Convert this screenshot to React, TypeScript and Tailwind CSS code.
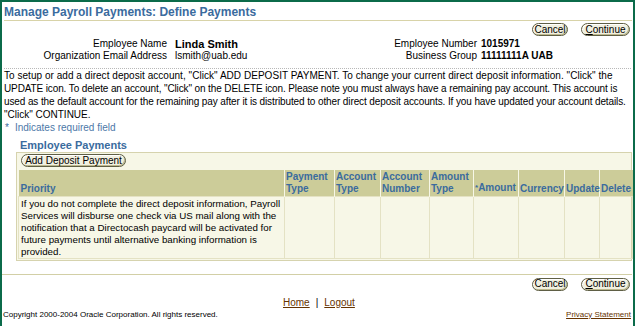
import React from "react";

const Btn = ({ children, w }: { children: React.ReactNode; w: string }) => (
  <button
    className={`${w} h-[13px] flex items-center justify-center rounded-[7px] border border-[#5f5f45] bg-[#f1f0e0] text-[10px] leading-[10px] text-black shadow-[inset_-1px_-1px_0_#bdb88e,inset_1px_1px_0_#ffffff]`}
  >
    {children}
  </button>
);

export default function App() {
  const cols = [
    { t: "Payment", b: "Type" },
    { t: "Account", b: "Type" },
    { t: "Account", b: "Number" },
    { t: "Amount", b: "Type" },
    { t: "", b: "Amount", req: true },
    { t: "", b: "Currency" },
    { t: "", b: "Update" },
    { t: "", b: "Delete" },
  ];
  const widths = [266, 50, 46, 49, 44, 45, 46, 35, 33];
  const para = [
    { t: 'To setup or add a direct deposit account, "Click" ADD DEPOSIT PAYMENT. To change your current direct deposit information. "Click" the', c: "tracking-[0.04px]" },
    { t: 'UPDATE icon. To delete an account, "Click" on the DELETE icon. Please note you must always have a remaining pay account. This account is', c: "tracking-[-0.12px]" },
    { t: "used as the default account for the remaining pay after it is distributed to other direct deposit accounts. If you have updated your account details.", c: "tracking-[-0.11px]" },
    { t: '"Click" CONTINUE.', c: "" },
  ];
  const body = [
    "If you do not complete the direct deposit information, Payroll",
    "Services will disburse one check via US mail along with the",
    "notification that a Directocash paycard will be activated for",
    "future payments until alternative banking information is",
    "provided.",
  ];
  return (
    <div
      className="w-[635px] h-[326px] border-l-2 border-t-2 border-r-2 border-[#0b6b4a] bg-white text-black overflow-hidden flex flex-col"
      style={{ fontFamily: '"Liberation Sans", Arial, sans-serif' }}
    >
      <div className="pl-[2px] pr-[1px] pt-[3px]">
        <div className="text-[12px] leading-[14px] font-bold text-[#3a6b9e] pb-[1px] border-b border-[#d8d3a8]">
          Manage Payroll Payments: Define Payments
        </div>
      </div>
      <div className="flex justify-end gap-[13px] pr-[3px] pt-[2px]">
        <Btn w="w-[36px]">Cancel</Btn>
        <Btn w="w-[49px]">
          <span>
            <span className="underline">C</span>ontinue
          </span>
        </Btn>
      </div>
      <div className="flex text-[10px] leading-[12px] pt-[2px] pl-[2px]">
        <div className="w-[163px] text-right flex flex-col">
          <span>Employee Name</span>
          <span>Organization Email Address</span>
        </div>
        <div className="flex-1 pl-[8px] flex flex-col">
          <span className="font-bold text-[11px]">Linda Smith</span>
          <span>lsmith@uab.edu</span>
        </div>
        <div className="text-right flex flex-col">
          <span>Employee Number</span>
          <span>Business Group</span>
        </div>
        <div className="w-[156px] pl-[4px] flex flex-col font-bold">
          <span>1015971</span>
          <span>11111111A UAB</span>
        </div>
      </div>
      <div className="mx-[2px] mt-[6px] border-b border-dotted border-[#b8b8b8]" />
      <div className="pl-[2px] text-[10px] leading-[13px] whitespace-nowrap">
        {para.map((l, i) => (
          <div key={i} className={l.c}>
            {l.t}
          </div>
        ))}
      </div>
      <div className="pl-[3px] text-[10px] leading-[13px] text-[#4d78a8]">
        <span className="text-[#3a6b9e]">*</span>
        <span className="pl-[6px]">Indicates required field</span>
      </div>
      <div className="pl-[14px] pr-[1px] pt-[5px]">
        <div className="text-[11px] leading-[13px] font-bold text-[#3a6b9e] pl-[4px]">
          Employee Payments
        </div>
        <div className="border border-[#d6d3ae] bg-[#f7f7e7] pt-[1px] pb-[1px] px-[1px]">
          <div className="pl-[3px] pb-[3px]">
            <Btn w="w-[105px]">Add Deposit Payment</Btn>
          </div>
          <table className="border-collapse table-fixed text-[10px] leading-[12px] w-[614px]">
            <colgroup>
              {widths.map((w, i) => (
                <col key={i} style={{ width: w }} />
              ))}
            </colgroup>
            <thead>
              <tr className="bg-[#cccc99] h-[26px] align-bottom">
                <th className="text-left font-bold text-[#3a6b9e] px-[2px] pb-[1px] border-r border-[#f7f7e7]">
                  Priority
                </th>
                {cols.map((c, i) => (
                  <th
                    key={i}
                    className="text-left font-bold text-[#3a6b9e] px-[1px] pb-[1px] border-r border-[#f7f7e7] last:border-r-0 whitespace-nowrap overflow-visible"
                  >
                    {c.t && <div>{c.t}</div>}
                    <div>
                      {c.req && <span className="text-[8px] align-middle">*</span>}
                      {c.b}
                    </div>
                  </th>
                ))}
              </tr>
            </thead>
            <tbody>
              <tr className="align-top h-[61px]">
                <td className="px-[2px] pt-[1px] border border-[#e4e2c4] text-[9.75px] leading-[12px] whitespace-nowrap">
                  {body.map((l, i) => (
                    <div key={i}>{l}</div>
                  ))}
                </td>
                {cols.map((c, i) => (
                  <td key={i} className="border border-[#e4e2c4]"></td>
                ))}
              </tr>
            </tbody>
          </table>
        </div>
      </div>
      <div className="mr-[1px] mt-[13px] border-b border-[#d2cfa6]" />
      <div className="flex justify-end gap-[13px] pr-[3px] pt-[3px]">
        <Btn w="w-[36px]">Cancel</Btn>
        <Btn w="w-[49px]">
          <span>
            <span className="underline">C</span>ontinue
          </span>
        </Btn>
      </div>
      <div className="relative flex-1">
        <div className="absolute left-[281px] top-[6px] text-[10px] leading-[12px]">
          <span className="text-[#663300] underline">Home</span>
          <span className="px-[6px]">|</span>
          <span className="text-[#663300] underline">Logout</span>
        </div>
        <div className="absolute left-[1px] top-[19px] text-[8px] leading-[10px]">
          Copyright 2000-2004 Oracle Corporation. All rights reserved.
        </div>
        <div className="absolute right-[2px] top-[19px] text-[8px] leading-[10px] text-[#663300] underline">
          Privacy Statement
        </div>
      </div>
    </div>
  );
}
